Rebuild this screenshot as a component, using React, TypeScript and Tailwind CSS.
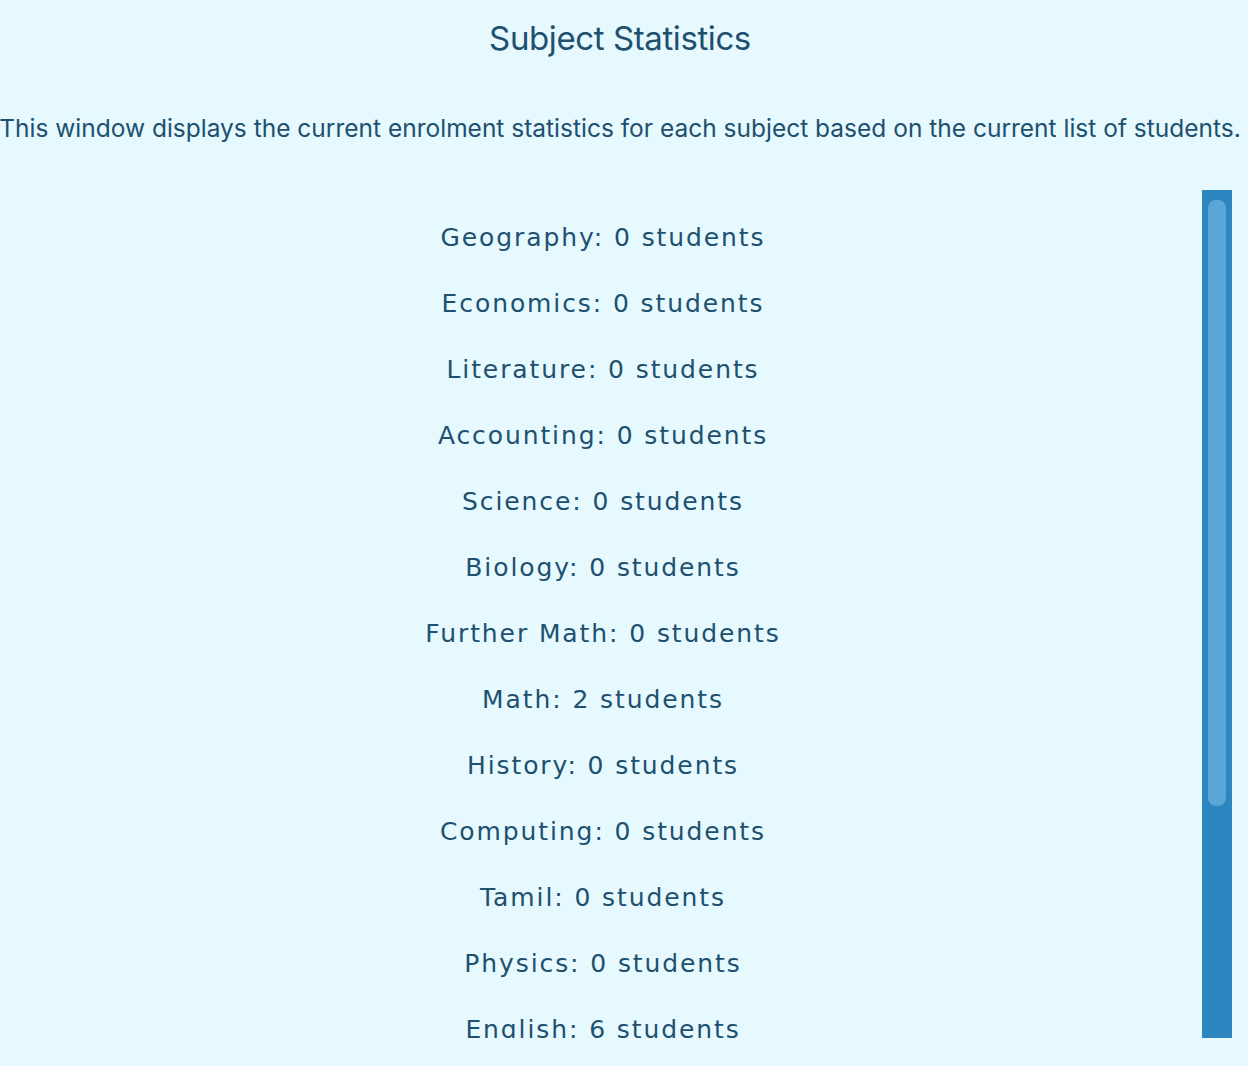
import React from "react";

const subjects: [string, number][] = [
  ["Geography", 0],
  ["Economics", 0],
  ["Literature", 0],
  ["Accounting", 0],
  ["Science", 0],
  ["Biology", 0],
  ["Further Math", 0],
  ["Math", 2],
  ["History", 0],
  ["Computing", 0],
  ["Tamil", 0],
  ["Physics", 0],
  ["English", 6],
];

export default function App() {
  return (
    <div className="w-[1248px] h-[1066px] bg-[#e5f9ff] text-[#21506f] overflow-hidden flex flex-col">
      <div className="h-[76px] flex items-center justify-center pr-[8px]">
        <h1 className="text-[33px] tracking-[-0.4px] font-['Inter',sans-serif] leading-none">Subject Statistics</h1>
      </div>
      <div className="h-[104px] flex items-center justify-center pr-[8px]">
        <p className="text-[24.5px] tracking-[0px] font-['Inter',sans-serif] whitespace-nowrap">
          This window displays the current enrolment statistics for each subject based on the current list of students.
        </p>
      </div>
      <div className="mt-[10px] h-[848px] flex">
        <div className="w-[1202px] h-full overflow-hidden pt-[15px]">
          {subjects.map(([name, n]) => (
            <div key={name} className="h-[66px] flex items-center justify-center">
              <span className="text-[25px] font-['DejaVu_Sans',sans-serif] tracking-[1.9px] pl-[4px]">
                {name}: {n} students
              </span>
            </div>
          ))}
        </div>
        <div className="w-[30px] h-full bg-[#2e86c1] pt-[10px] px-[6px]">
          <div className="h-[606px] rounded-[8px] bg-[#5ba5d7]" />
        </div>
      </div>
    </div>
  );
}
